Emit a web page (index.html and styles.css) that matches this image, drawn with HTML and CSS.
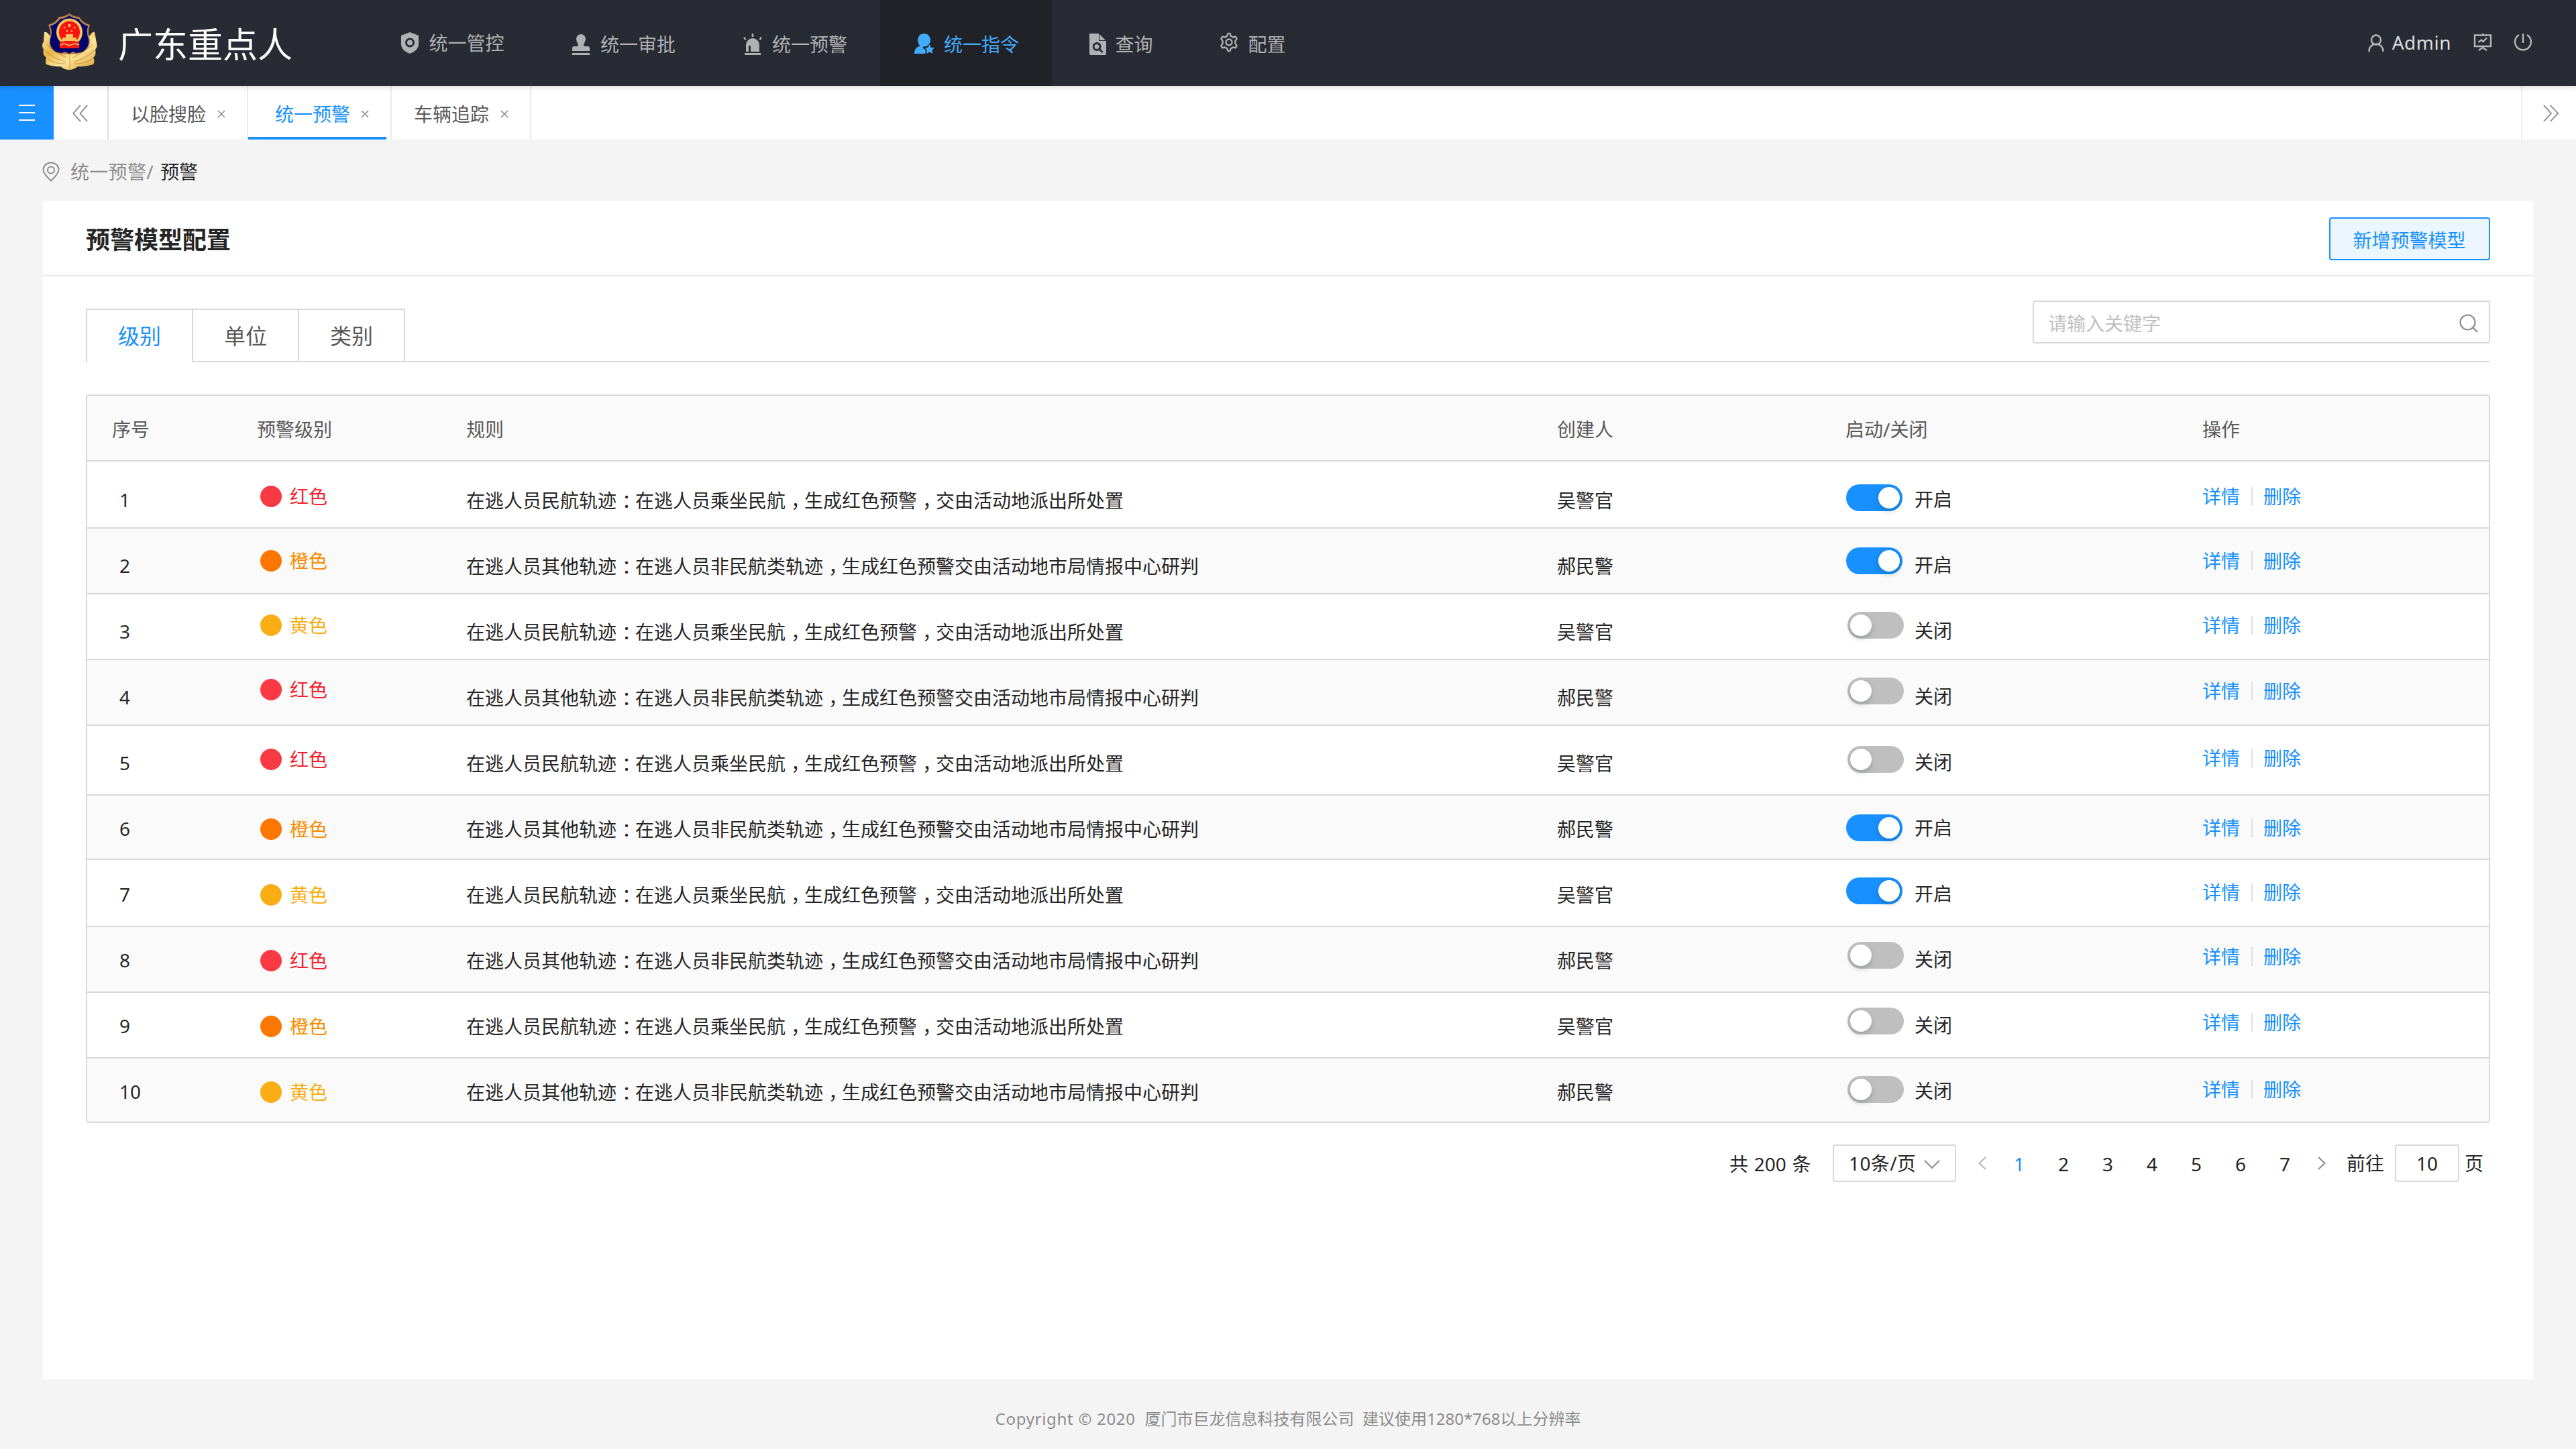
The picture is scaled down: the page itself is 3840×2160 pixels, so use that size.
FILE: index.html
```html
<!DOCTYPE html>
<html lang="zh-CN">
<head>
<meta charset="utf-8">
<title>预警模型配置</title>
<link rel="stylesheet" href="styles.css">
</head>
<body>
<header class="top">
  <div class="brand">
    <svg class="emblem" viewBox="0 0 84 84">
      <defs>
        <linearGradient id="gold" x1="0" y1="0" x2="1" y2="1">
          <stop offset="0" stop-color="#fbe6a0"/><stop offset=".35" stop-color="#e9b64a"/><stop offset=".6" stop-color="#fde79a"/><stop offset="1" stop-color="#d79a2e"/>
        </linearGradient>
      </defs>
      <path fill="url(#gold)" d="M4 28Q8 27 12 33L72 33Q75 27 79 28L82 44Q84 50 80 54Q82 62 77 66Q80 71 77 76Q62 80 54 79Q48 84 41 84Q34 84 28 79Q18 80 7 76Q5 71 7 66Q1 62 3 54Q-1 48 3 42Z"/>
      <path fill="none" stroke="#c98b35" stroke-width="1.2" stroke-opacity=".7" d="M8 46Q18 58 38 66M6 56Q18 68 36 72M9 68Q22 76 36 75M76 46Q64 58 46 66M78 56Q64 68 48 72M75 68Q62 76 48 75M42 58V82"/>
      <path fill="#b98446" d="M41 0Q48 5 56 5Q61 14 72 17Q68 28 72 40Q73 52 60 58L52 61H30L22 58Q9 52 12 40Q15 28 10 17Q21 14 26 5Q35 5 41 0Z"/>
      <path fill="#04046c" d="M41 3Q48 8 55 8Q60 16 69 19Q66 28 70 38Q72 52 59 58L51 59L47 57L41 60L35 57L30 59L23 58Q11 52 13 38Q17 28 13 19Q22 16 28 8Q35 8 41 3Z"/>
      <ellipse cx="41.500" cy="28" rx="19.500" ry="20.500" fill="#f3c75c"/>
      <ellipse cx="41.500" cy="28" rx="15.500" ry="16.500" fill="#f9120f"/>
      <path fill="#f3c75c" d="M36 31H47V36H52V41H31V36H36Z"/>
      <path fill="#fb1713" d="M27 41Q34 44 41 41Q49 44 56 41V52H27Z"/>
      <path fill="none" stroke="#f3c75c" stroke-width="1.600" d="M28 47Q35 43 41 48Q49 43 56 47"/>
      <g fill="#eeb548"><circle cx="41.500" cy="18" r="2.300"/><circle cx="34" cy="21" r="1.500"/><circle cx="49" cy="21" r="1.500"/><circle cx="38" cy="26" r="1.500"/><circle cx="45" cy="26" r="1.500"/></g>
    </svg>
    <h1>广东重点人</h1>
  </div>
  <nav class="nav">
    <a class="raised"><svg viewBox="0 0 32 32"><path fill-rule="evenodd" d="M16 0L29 5V18C29 25 22 30 16 32C10 30 3 25 3 18V5ZM16 8.500A7 7 0 1 0 16 22.500A7 7 0 1 0 16 8.500ZM16 11.500A4 4 0 1 1 16 19.500A4 4 0 1 1 16 11.500Z"/></svg><span>统一管控</span></a>
    <a><svg viewBox="0 0 32 32"><path d="M16 1A7 7 0 0 1 23 8C23 12 20 14 20 19H26Q29 19 29 22V26H3V22Q3 19 6 19H12C12 14 9 12 9 8A7 7 0 0 1 16 1ZM3 29H29V32H3Z"/></svg><span>统一审批</span></a>
    <a><svg viewBox="0 0 32 32"><path fill-rule="evenodd" d="M14.700 0H17.300V5H14.700ZM2 6L4.500 5L6.500 9L4.500 10ZM30 6L27.500 5L25.500 9L27.500 10ZM6 27V17A10 10 0 0 1 26 17V27ZM10 18V27H13V18ZM4 29H28V32H4Z"/></svg><span>统一预警</span></a>
    <a class="active"><svg viewBox="0 0 32 32"><path d="M15.500 0C20.500 0 25 4 25 10C25 14 22 17 19.500 19L15 19.500C13 20 13 22 17 24C19 25 17 28 17 30H1C1 24 4 20 9.500 18.500C7.500 16 6 13 6 10C6 4 10.500 0 15.500 0ZM23.500 16L25.700 20.700L31 21.300L27.200 25L28.500 30L23.500 27.500L18.500 30L19.800 25L17 21.300L21.300 20.700Z"/></svg><span>统一指令</span></a>
    <a class="short"><svg viewBox="0 0 32 32"><path fill-rule="evenodd" d="M6 0H20V0.500L20 11H31V30Q31 32 29 32H8Q6 32 6 30ZM21 1L30 10H21ZM17 13A6.500 6.500 0 1 0 20.500 25L24.500 29L26.500 27L22.500 23A6.500 6.500 0 0 0 17 13ZM17 16A3.500 3.500 0 1 1 17 23A3.500 3.500 0 1 1 17 16Z"/></svg><span>查询</span></a>
    <a class="short gear"><svg viewBox="0 0 32 32"><path fill="none" stroke="currentColor" stroke-width="2.500" stroke-linejoin="round" d="M14.500 2H17.500L19 6L22.500 8L26.500 7L28.500 10.500L26 14V18L28.500 21.500L26.500 25L22.500 24L19 26L17.500 30H14.500L13 26L9.500 24L5.500 25L3.500 21.500L6 18V14L3.500 10.500L5.500 7L9.500 8L13 6Z"/><circle cx="16" cy="16" r="4.800" fill="none" stroke="currentColor" stroke-width="2.500"/></svg><span>配置</span></a>
  </nav>
  <div class="user">
    <svg class="person" viewBox="0 0 24 26"><circle cx="12" cy="8.500" r="7" /><path d="M1.500 26C1.500 10.800 22.500 10.800 22.500 26"/></svg>
    <span>Admin</span>
    <svg class="board" viewBox="0 0 28 28"><path d="M14 1V3M2 3.500H26V20H2ZM7.500 14L12 10.500L14.500 13L20 7.500M14 20V23M8 26L14 22L20 26"/></svg>
    <svg class="power" viewBox="0 0 28 28"><path d="M14 1V15M8 3A12 12 0 1 0 20 3"/></svg>
  </div>
</header>
<div class="tabbar">
  <div class="menu"><i></i><i></i><i></i></div>
  <div class="fold"><svg viewBox="0 0 26 28"><path d="M13 1L1.500 14L13 27M24 1L12.500 14L24 27"/></svg></div>
  <div class="page-tab first">以脸搜脸<svg viewBox="0 0 12 12"><path d="M1 1L11 11M11 1L1 11"/></svg></div>
  <div class="page-tab current">统一预警<svg viewBox="0 0 12 12"><path d="M1 1L11 11M11 1L1 11"/></svg></div>
  <div class="page-tab last">车辆追踪<svg viewBox="0 0 12 12"><path d="M1 1L11 11M11 1L1 11"/></svg></div>
  <div class="more"><svg viewBox="0 0 26 28"><path d="M1 1L13 14L1 27M11.500 1L24 14L11.500 27"/></svg></div>
</div>
<div class="crumb">
  <svg viewBox="0 0 26 30"><path d="M13 28.500C6 22 1.500 17 1.500 12A11.500 10.500 0 0 1 24.500 12C24.500 17 20 22 13 28.500Z"/><circle cx="13" cy="12.500" r="5"/></svg>
  <span>统一预警/</span><b>预警</b>
</div>
<main class="card">
  <div class="card-head"><h2>预警模型配置</h2><button>新增预警模型</button></div>
  <div class="card-body">
    <div class="filter">
      <div class="tab on">级别</div><div class="tab">单位</div><div class="tab">类别</div>
      <div class="filter-rest"><div class="search"><span>请输入关键字</span><svg viewBox="0 0 28 28"><circle cx="12.500" cy="12.500" r="11"/><path d="M20.500 20.500L27 27"/></svg></div></div>
    </div>
    <div class="table">
      <div class="thead"><div>序号</div><div>预警级别</div><div>规则</div><div>创建人</div><div>启动/关闭</div><div>操作</div></div>
      <div class="row r1"><div class="no">1</div><div class="level red">红色</div><div class="rule">在逃人员民航轨迹<em>：</em>在逃人员乘坐民航<em>，</em>生成红色预警<em>，</em>交由活动地派出所处置</div><div class="who">吴警官</div><div class="state"><i class="switch on"></i><span>开启</span></div><div class="act"><a>详情</a><a>删除</a></div></div>
      <div class="row r2"><div class="no">2</div><div class="level orange">橙色</div><div class="rule">在逃人员其他轨迹<em>：</em>在逃人员非民航类轨迹<em>，</em>生成红色预警交由活动地市局情报中心研判</div><div class="who">郝民警</div><div class="state"><i class="switch on"></i><span>开启</span></div><div class="act"><a>详情</a><a>删除</a></div></div>
      <div class="row r3"><div class="no">3</div><div class="level yellow">黄色</div><div class="rule">在逃人员民航轨迹<em>：</em>在逃人员乘坐民航<em>，</em>生成红色预警<em>，</em>交由活动地派出所处置</div><div class="who">吴警官</div><div class="state"><i class="switch"></i><span>关闭</span></div><div class="act"><a>详情</a><a>删除</a></div></div>
      <div class="row r4"><div class="no">4</div><div class="level red">红色</div><div class="rule">在逃人员其他轨迹<em>：</em>在逃人员非民航类轨迹<em>，</em>生成红色预警交由活动地市局情报中心研判</div><div class="who">郝民警</div><div class="state"><i class="switch"></i><span>关闭</span></div><div class="act"><a>详情</a><a>删除</a></div></div>
      <div class="row r5"><div class="no">5</div><div class="level red">红色</div><div class="rule">在逃人员民航轨迹<em>：</em>在逃人员乘坐民航<em>，</em>生成红色预警<em>，</em>交由活动地派出所处置</div><div class="who">吴警官</div><div class="state"><i class="switch"></i><span>关闭</span></div><div class="act"><a>详情</a><a>删除</a></div></div>
      <div class="row r6"><div class="no">6</div><div class="level orange">橙色</div><div class="rule">在逃人员其他轨迹<em>：</em>在逃人员非民航类轨迹<em>，</em>生成红色预警交由活动地市局情报中心研判</div><div class="who">郝民警</div><div class="state"><i class="switch on"></i><span>开启</span></div><div class="act"><a>详情</a><a>删除</a></div></div>
      <div class="row r7"><div class="no">7</div><div class="level yellow">黄色</div><div class="rule">在逃人员民航轨迹<em>：</em>在逃人员乘坐民航<em>，</em>生成红色预警<em>，</em>交由活动地派出所处置</div><div class="who">吴警官</div><div class="state"><i class="switch on"></i><span>开启</span></div><div class="act"><a>详情</a><a>删除</a></div></div>
      <div class="row r8"><div class="no">8</div><div class="level red">红色</div><div class="rule">在逃人员其他轨迹<em>：</em>在逃人员非民航类轨迹<em>，</em>生成红色预警交由活动地市局情报中心研判</div><div class="who">郝民警</div><div class="state"><i class="switch"></i><span>关闭</span></div><div class="act"><a>详情</a><a>删除</a></div></div>
      <div class="row r9"><div class="no">9</div><div class="level orange">橙色</div><div class="rule">在逃人员民航轨迹<em>：</em>在逃人员乘坐民航<em>，</em>生成红色预警<em>，</em>交由活动地派出所处置</div><div class="who">吴警官</div><div class="state"><i class="switch"></i><span>关闭</span></div><div class="act"><a>详情</a><a>删除</a></div></div>
      <div class="row r10"><div class="no">10</div><div class="level yellow">黄色</div><div class="rule">在逃人员其他轨迹<em>：</em>在逃人员非民航类轨迹<em>，</em>生成红色预警交由活动地市局情报中心研判</div><div class="who">郝民警</div><div class="state"><i class="switch"></i><span>关闭</span></div><div class="act"><a>详情</a><a>删除</a></div></div>
    </div>
    <div class="pager">
      <span class="total">共 200 条</span>
      <div class="size">10条/页<svg viewBox="0 0 24 14"><path d="M1 1L12 12L23 1"/></svg></div>
      <svg class="prev" viewBox="0 0 12 20"><path d="M11 1L1.500 10L11 19"/></svg>
      <div class="nums"><b>1</b><span>2</span><span>3</span><span>4</span><span>5</span><span>6</span><span>7</span></div>
      <svg class="next" viewBox="0 0 12 20"><path d="M1 1L10.500 10L1 19"/></svg>
      <span class="goto">前往</span>
      <div class="jump">10</div>
      <span>页</span>
    </div>
  </div>
</main>
<footer><span>Copyright © 2020&nbsp; </span>厦门市巨龙信息科技有限公司&nbsp; 建议使用1280*768以上分辨率</footer>
</body>
</html>
```
FILE: styles.css
```css
* { box-sizing: border-box; margin: 0; padding: 0; }
body {
  width: 3840px; height: 2160px; overflow: hidden;
  display: flex; flex-direction: column;
  background: #f4f4f4; color: #262626;
  font: 28px/40px "Noto Sans", "Noto Sans CJK SC", sans-serif;
}
svg { display: block; flex: none; fill: none; stroke: #8c8c8c; stroke-width: 2; }
i { display: block; flex: none; }

.top { height: 128px; flex: none; display: flex; background: #282b34; position: relative; z-index: 1; box-shadow: 0 2px 8px rgba(0,0,0,.15); }
.brand { width: 544px; display: flex; padding-left: 62px; }
.emblem { width: 84px; height: 84px; margin-top: 20px; stroke: none; }
.brand h1 { margin-left: 30px; padding-top: 2px; font-size: 52px; font-weight: 400; line-height: 128px; color: #fff; }
.nav { display: flex; }
.nav a { width: 256px; display: flex; align-items: center; justify-content: center; gap: 13px; color: #b0b1b4; padding: 4px 0 0 1px; }
.nav a.raised { padding: 0 0 0 3px; gap: 12px; }
.nav a.short { width: 200px; gap: 12px; }
.nav a.gear { width: 194px; padding-left: 3px; }
.nav a.gear svg { margin-top: -6px; height: 30px; }
.nav a.active { color: #42acff; background: #212227; }
.nav svg { width: 32px; height: 32px; fill: currentColor; stroke: none; }
.user { margin-left: auto; margin-right: 65px; display: flex; align-items: center; color: #dededf; }
.user svg { stroke: #b6b7ba; stroke-width: 2.4; }
.user span { margin: -2px 33px 0 12px; letter-spacing: .5px; }
.person { width: 24px; height: 26px; }
.board { width: 28px; height: 28px; margin: -2px 32px 0 0; }
.power { width: 28px; height: 28px; margin-top: -2px; }

.tabbar { height: 80px; flex: none; display: flex; background: #fff; }
.menu { width: 80px; padding: 28px 28px 0; background: #1890ff; }
.menu i { height: 2px; background: #fff; margin-bottom: 9px; }
.fold { width: 82px; border-right: 2px solid #dfdfdf; padding: 28px 0 0 27px; }
.fold svg, .more svg { width: 26px; height: 26px; }
.page-tab { width: 208px; display: flex; align-items: center; gap: 17px; border-right: 2px solid #ececec; color: #595959; padding: 3px 0 0 33px; }
.page-tab svg { width: 12px; height: 12px; stroke-width: 1.6; }
.current { width: 214px; padding-left: 40px; gap: 16px; color: #1890ff; background: linear-gradient(#1890ff, #1890ff) 0 100% / 206px 4px no-repeat; }
.more { margin-left: auto; width: 82px; border-left: 2px solid #ececec; padding: 28px 0 0 30px; }

.crumb { height: 92px; flex: none; display: flex; align-items: center; padding: 4px 0 0 63px; color: #8c8c8c; }
.crumb svg { width: 26px; height: 30px; margin-right: 16px; }
.crumb span { letter-spacing: .3px; }
.crumb b { font-weight: 400; color: #262626; margin-left: 10px; }

.card { margin: 0 64px; height: 1756px; flex: none; background: #fff; }
.card-head { height: 112px; display: flex; align-items: center; justify-content: space-between; padding: 2px 64px 0; border-bottom: 2px solid #e8e8e8; }
.card-head h2 { font-size: 36px; line-height: 52px; font-weight: 700; padding-top: 3px; }
button { width: 240px; height: 64px; border: 2px solid #1890ff; border-radius: 4px; background: #ebf6ff; color: #1890ff; font: inherit; padding: 3px 1px 0 0; }
.card-body { padding: 36px 64px 0; }

.filter { display: flex; align-items: flex-end; height: 92px; margin-bottom: 48px; }
.tab { width: 158px; height: 80px; display: flex; align-items: center; justify-content: center; font-size: 32px; color: #595959; border: 2px solid #d9d9d9; border-left: 0; padding-top: 1px; }
.tab.on { width: 160px; color: #1890ff; border-left: 2px solid #d9d9d9; border-bottom: 0; padding-bottom: 2px; }
.filter-rest { flex: 1; height: 92px; border-bottom: 2px solid #d9d9d9; display: flex; justify-content: flex-end; }
.search { width: 682px; height: 64px; display: flex; align-items: center; justify-content: space-between; border: 2px solid #d9d9d9; border-radius: 4px; padding: 3px 16px 0 21px; color: #bfbfbf; }
.search svg { width: 28px; height: 28px; stroke-width: 2.2; }

.table { border: 2px solid #d9d9d9; border-radius: 4px; overflow: hidden; }
.thead, .row { display: grid; grid-template-columns: 216px 312px 1626px 430px 532px 1fr; padding-left: 37px; border-bottom: 2px solid #d9d9d9; }
.thead { height: 98px; line-height: 100px; background: #fafafa; color: #595959; }
.row > div { height: 40px; }
.row:nth-child(odd) { background: #fafafa; }
/* Row heights and the vertical offset of text, level mark, switch and links */
.r1 { height: 100px; --t: 38px; --l: 32px; --s: 34px; --a: 32px; }
.r2 { height: 98px; --t: 36px; --l: 28px; --s: 28px; --a: 28px; }
.r3 { height: 98px; --t: 36px; --l: 26px; --s: 26px; --a: 26px; }
.r4 { height: 98px; --t: 36px; --l: 24px; --s: 26px; --a: 26px; }
.r5 { height: 104px; --t: 36px; --l: 30px; --s: 30px; --a: 28px; }
.r6 { height: 96px; --t: 30px; --l: 30px; --s: 28px; --a: 28px; }
.r7 { height: 100px; --t: 32px; --l: 32px; --s: 26px; --a: 28px; }
.r8 { height: 98px; --t: 30px; --l: 30px; --s: 22px; --a: 24px; }
.r9 { height: 98px; --t: 30px; --l: 30px; --s: 22px; --a: 24px; }
.r10 { height: 94px; --t: 30px; --l: 30px; --s: 26px; --a: 26px; border-bottom: 0; }
.no { margin-top: calc(var(--t) - 1px); padding-left: 11px; }
.rule, .who { margin-top: var(--t); }
.rule { white-space: nowrap; }
/* Half-width punctuation glyphs, padded back to a full cell so they sit in its middle */
.rule em { font-style: normal; font-family: "Noto Sans CJK SC", sans-serif; font-feature-settings: "halt"; padding: 0 6px 0 8px; line-height: 1; }
.level { display: flex; align-items: center; gap: 12px; padding-left: 5px; margin-top: var(--l); }
.level::before { content: ""; width: 32px; height: 32px; border-radius: 50%; background: currentColor; }
.red { color: #f5222d; } .red::before { background: #f93943; }
.orange { color: #fa8c00; } .orange::before { background: #fd7700; }
.yellow { color: #faad14; }
.state { display: flex; align-items: flex-start; padding-left: 1px; }
.switch { width: 84px; height: 40px; border-radius: 20px; background: #bfbfbf; margin: var(--s) 16px 0 2px; padding: 4px; }
.switch::before { content: ""; display: block; width: 32px; height: 32px; border-radius: 50%; background: #fff; box-shadow: 0 4px 8px rgba(0,35,11,.2); }
.switch.on { background: #1890ff; margin: var(--s) 18px 0 0; padding-left: 48px; }
.state span { margin-top: calc(var(--t) - 2px); }
.act { display: flex; align-items: center; margin-top: var(--a); color: #1890ff; }
.act a + a { margin-left: 17px; padding-left: 16px; line-height: 28px; border-left: 2px solid #e0e0e0; }

.pager { display: flex; align-items: center; height: 56px; margin-top: 32px; padding-left: 2450px; }
.total { width: 154px; padding-top: 2px; word-spacing: 1.5px; }
.size { width: 184px; height: 56px; display: flex; align-items: center; justify-content: space-between; border: 2px solid #d9d9d9; border-radius: 4px; padding: 0 22px; letter-spacing: .4px; }
.size svg { width: 24px; height: 14px; margin-top: 4px; }
.prev, .next { width: 12px; height: 20px; }
.prev { margin-left: 33px; stroke: #b5b5b5; }
.nums { display: flex; margin: 1px 16px 0 16px; }
.nums > * { width: 66px; text-align: center; font-weight: 400; }
.nums b { color: #1890ff; }
.goto { margin: 0 16px 0 31px; }
.jump { width: 96px; height: 56px; line-height: 52px; text-align: center; border: 2px solid #d9d9d9; border-radius: 4px; margin-right: 8px; }
footer { text-align: center; font-size: 24px; line-height: 118px; color: #8c8c8c; }
footer span { letter-spacing: .7px; }
```
